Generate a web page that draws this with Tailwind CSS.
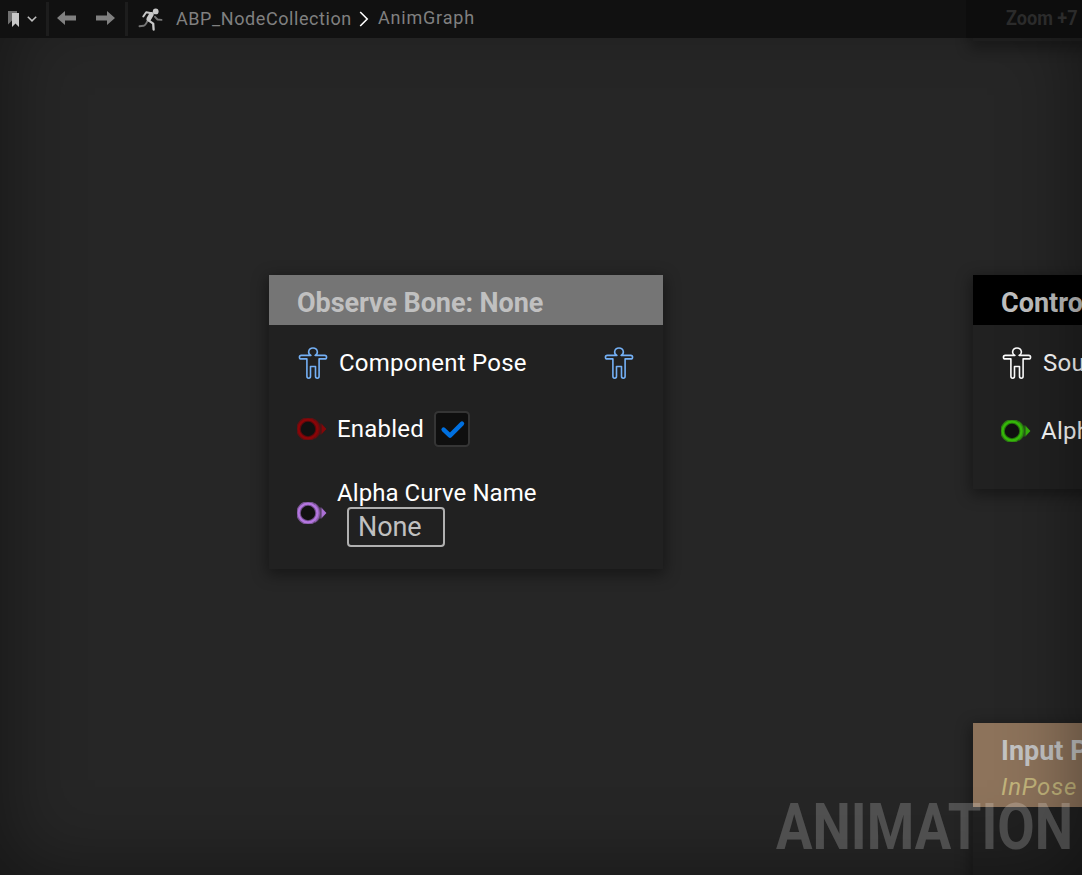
<!DOCTYPE html>
<html lang="en">
<head>
<meta charset="utf-8">
<title>AnimGraph</title>
<script src="https://cdn.jsdelivr.net/npm/@tailwindcss/browser@4"></script>
</head>
<body class="h-[875px] w-[1082px] overflow-hidden bg-[#262626] font-[Roboto,sans-serif] text-white">
<svg class="hidden">
  <symbol id="pose" viewBox="0 0 30 34">
    <path d="M12.9 9.4 C11 8.4 10.4 6.9 10.7 5.4 C11.1 3.3 12.9 2 15 2 C17.1 2 18.9 3.3 19.3 5.4 C19.6 6.9 19 8.4 17.1 9.4 H26.7 C29.2 9.4 29.2 12.9 26.7 12.9 H21.1 V30.3 C21.1 32.9 17.5 32.9 17.5 30.3 V20.5 H12.5 V30.3 C12.5 32.9 8.9 32.9 8.9 30.3 V12.9 H3.3 C0.8 12.9 0.8 9.4 3.3 9.4 Z" fill="none" stroke="currentColor" stroke-width="1.6" stroke-linejoin="round"/>
  </symbol>
  <symbol id="pin" viewBox="0 0 30 22">
    <path d="M18 1 Q21.5 3 22.6 5.6 H24.8 L29.4 11 L24.8 16.4 H22.6 Q21.5 19 18 21 Z" fill="currentColor" opacity=".4"/>
    <path d="M24.6 6.2 L29.4 11 L24.6 15.8 Z" fill="currentColor" opacity=".9"/>
    <circle cx="11" cy="11" r="9.5" fill="#111" stroke="currentColor" stroke-width="4.6" stroke-opacity=".6"/>
    <circle cx="11" cy="11" r="9.4" fill="none" stroke="currentColor" stroke-width="2.2"/>
  </symbol>
</svg>
<div class="relative flex h-full w-full flex-col overflow-hidden">
  <header class="z-20 flex h-[38px] shrink-0 items-center bg-[#111111] text-[#808080]">
    <svg class="h-[38px] w-[172px] shrink-0" viewBox="0 0 172 38">
      <path d="M8 11 H17 V13 H12 V20.5 L8 24.5 Z" fill="#707070"/>
      <path d="M12 13 H19 V27 L15.5 23.5 L12 27 Z" fill="#c8c8c8"/>
      <path d="M27.8 16.8 L32 20.9 L36.2 16.8" fill="none" stroke="#c0c0c0" stroke-width="1.5"/>
      <path d="M46 2 H49 V36 H46 Z M125 2 H128 V36 H125 Z" fill="#1d1d1d"/>
      <path d="M57 18 L65 11 V15.4 H76 V20.6 H65 V25 Z M115 18 L107 11 V15.4 H96 V20.6 H107 V25 Z" fill="#808080"/>
      <circle cx="155.7" cy="11.4" r="2.9" fill="#c8c8c8"/>
      <g fill="none" stroke-linecap="round" stroke-linejoin="round">
        <path d="M147.8 20 Q146 25 143.5 25.8 L139.5 26.2 M155 16.8 L157.5 19.5 L161.5 19.9" stroke="#777" stroke-width="1.9"/>
        <path d="M143.3 16.5 L146.2 12.3 L151.5 13.2" stroke="#c8c8c8" stroke-width="2"/>
        <path d="M151.5 14.3 L148.7 19" stroke="#c8c8c8" stroke-width="4.6"/>
        <path d="M148.5 20.4 L153.2 23.6 L153.6 29.5" stroke="#c8c8c8" stroke-width="2.3"/>
      </g>
    </svg>
    <span class="ml-1 w-[176px] pb-[2px] text-[18px] tracking-[0.58px] whitespace-nowrap">ABP_NodeCollection</span>
    <svg class="ml-[7px] h-[38px] w-[10px]" viewBox="0 0 10 38"><path d="M1.2 12 L8.2 19 L1.2 26" fill="none" stroke="#fff" stroke-width="1.6"/></svg>
    <span class="ml-[9px] pb-[3px] text-[18px] tracking-[0.8px] whitespace-nowrap">AnimGraph</span>
    <div class="ml-auto flex h-full w-[116px] items-center bg-[#0d0d0d] pl-[40px]"><span class="origin-left scale-x-[0.86] text-[21px] font-bold whitespace-nowrap text-[#2b2b2b]">Zoom +7</span></div>
  </header>

  <main class="relative grow">
    <div class="absolute -top-[20px] left-[973px] h-[23px] w-[160px] bg-[#212121] shadow-[0_4px_14px_4px_rgba(0,0,0,0.3)]"></div>

    <section class="absolute top-[237px] left-[269px] flex h-[294px] w-[394px] flex-col bg-[#212121] shadow-[0_4px_14px_2px_rgba(0,0,0,0.4)]">
      <h2 class="flex h-[50px] shrink-0 items-center bg-[#757575] pt-[6px] pl-[28px] text-[27px] font-bold tracking-[-0.08px] whitespace-nowrap text-[#c0c0c0]">Observe Bone: None</h2>
      <div class="mt-[21px] flex h-[34px] items-center px-[29px]">
        <svg class="h-[34px] w-[30px] text-[#74b0f5]"><use href="#pose"/></svg>
        <span class="ml-[11px] text-[24px] tracking-[0.25px] whitespace-nowrap">Component Pose</span>
        <svg class="ml-auto h-[34px] w-[30px] text-[#74b0f5]"><use href="#pose"/></svg>
      </div>
      <div class="mt-[31px] flex h-[36px] items-center pl-[28px]">
        <svg class="h-[22px] w-[30px] text-[#8b0508]"><use href="#pin"/></svg>
        <span class="ml-[10px] w-[97px] text-[24px] tracking-[0.2px] whitespace-nowrap">Enabled</span>
        <svg class="h-[36px] w-[36px]" viewBox="0 0 36 36"><rect x="1" y="1" width="34" height="34" rx="3.5" fill="#0f0f0f" stroke="#353535" stroke-width="2"/><path d="M9.6 18.6 L16 24.6 L28 12.6" fill="none" stroke="#0070e0" stroke-width="4.4" stroke-linecap="round" stroke-linejoin="round"/></svg>
      </div>
      <div class="mt-[32px] flex items-start pl-[28px]">
        <svg class="mt-[23px] h-[22px] w-[30px] text-[#b476e0]"><use href="#pin"/></svg>
        <div class="ml-[10px] flex flex-col">
          <span class="h-[28px] text-[24px] leading-[28px] tracking-[0.07px] whitespace-nowrap">Alpha Curve Name</span>
          <div class="ml-[10px] flex h-[40px] w-[98px] items-center rounded-[4px] border-2 border-[#b0b0b0] pl-[9px] text-[27px] tracking-[-0.1px] text-[#c0c0c0]">None</div>
        </div>
      </div>
    </section>

    <section class="absolute top-[237px] left-[973px] flex h-[214px] w-[300px] flex-col bg-[#212121] shadow-[0_4px_14px_2px_rgba(0,0,0,0.4)]">
      <h2 class="flex h-[50px] shrink-0 items-center bg-black pt-[6px] pl-[28px] text-[27px] font-bold whitespace-nowrap text-[#c0c0c0]">Control Rig</h2>
      <div class="mt-[21px] flex h-[34px] items-center px-[29px]">
        <svg class="h-[34px] w-[30px] text-white"><use href="#pose"/></svg>
        <span class="ml-[11px] text-[24px] tracking-[0.3px] whitespace-nowrap">Source</span>
      </div>
      <div class="mt-[33px] flex h-[36px] items-center pl-[28px]">
        <svg class="h-[22px] w-[30px] text-[#36ba0a]"><use href="#pin"/></svg>
        <span class="ml-[10px] text-[24px] tracking-[0.3px] whitespace-nowrap">Alpha</span>
      </div>
    </section>

    <section class="absolute top-[685px] left-[973px] flex h-[250px] w-[300px] flex-col bg-[#212121] shadow-[0_4px_14px_2px_rgba(0,0,0,0.4)]">
      <div class="flex h-[84px] shrink-0 flex-col bg-[#8d735b] pt-[11px] pl-[28px] whitespace-nowrap">
        <h2 class="text-[27px] leading-[34px] font-bold text-[#c4c4c4]">Input Pose</h2>
        <span class="mt-[4px] text-[24px] leading-[30px] tracking-[0.8px] text-[#c3b57c] italic">InPose</span>
      </div>
    </section>

    <div class="pointer-events-none absolute inset-x-0 -top-[38px] bottom-0 shadow-[inset_0_0_80px_0_rgba(0,0,0,0.45)]"></div>
    <div class="absolute top-[751px] left-[776px] origin-left scale-x-[0.835] text-[65px] leading-[76px] font-bold whitespace-nowrap text-white/20">ANIMATION</div>
  </main>
</div>
</body>
</html>
